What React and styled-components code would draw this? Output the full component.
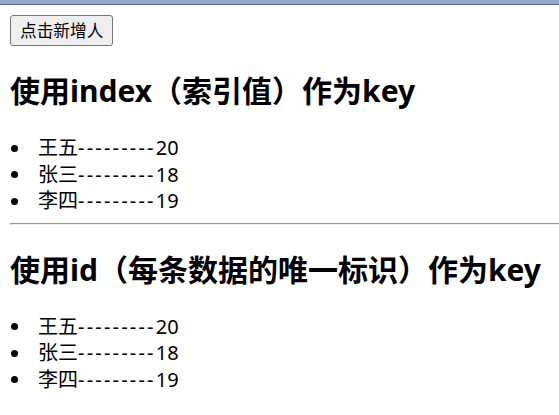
import React, { useState } from "react";
import styled, { createGlobalStyle } from "styled-components";

const GlobalStyle = createGlobalStyle`
  html, body {
    margin: 0;
    padding: 0;
    background: #ffffff;
    overflow: hidden;
  }
  body {
    font-family: "Noto Sans", "Noto Sans CJK SC", sans-serif;
    color: #000000;
  }
`;

const initialPeople = [
  { id: "001", name: "王五", age: 20 },
  { id: "002", name: "张三", age: 18 },
  { id: "003", name: "李四", age: 19 },
];

function PersonRow({ name, age }) {
  return (
    <Item>
      <Bullet />
      <span>{name}</span>
      <Dashes>---------</Dashes>
      <span>{age}</span>
    </Item>
  );
}

function App() {
  const [people] = useState(initialPeople);

  return (
    <>
      <GlobalStyle />
      <ChromeBar />
      <Page>
        <Toolbar>
          <AddButton type="button">点击新增人</AddButton>
        </Toolbar>

        <Title>使用index（索引值）作为key</Title>
        <List>
          {people.map((p, index) => (
            <PersonRow key={index} {...p} />
          ))}
        </List>

        <Divider />

        <Title>使用id（每条数据的唯一标识）作为key</Title>
        <List>
          {people.map((p) => (
            <PersonRow key={p.id} {...p} />
          ))}
        </List>
      </Page>
    </>
  );
}

const ChromeBar = styled.div`
  height: 4px;
  background: #93a9c6;
  border-bottom: 1px solid #5a6b7f;
`;

const Page = styled.div`
  padding: 10px 0 0 10px;
`;

const Toolbar = styled.div`
  display: flex;
  height: 31px;
`;

const AddButton = styled.button`
  height: 31px;
  padding: 0 9px;
  border: 1px solid #767676;
  border-radius: 3px;
  background: #efefef;
  color: #000000;
  font-family: "Noto Sans CJK SC", sans-serif;
  font-size: 16.7px;
  line-height: 29px;
`;

const Title = styled.h2`
  margin: 25px 0 24px;
  font-size: 30px;
  font-weight: 700;
  line-height: 40px;
  white-space: nowrap;
`;

const List = styled.ul`
  margin: 0;
  padding: 0;
  list-style: none;
`;

const Item = styled.li`
  display: flex;
  align-items: center;
  height: 26.5px;
  font-size: 20px;
  line-height: 26.5px;
  white-space: nowrap;
`;

const Bullet = styled.span`
  flex: none;
  width: 28px;
  display: flex;
  align-items: center;

  &::before {
    content: "";
    width: 7px;
    height: 7px;
    margin-left: 1px;
    border-radius: 50%;
    background: #000000;
  }
`;

const Dashes = styled.span`
  letter-spacing: 2.2px;
`;

const Divider = styled.hr`
  margin: 8px 0 0;
  height: 0;
  border: 0;
  border-top: 1px solid #9a9a9a;
  border-left: 1px solid #9a9a9a;
  border-bottom: 1px solid #eeeeee;
`;

export default App;
